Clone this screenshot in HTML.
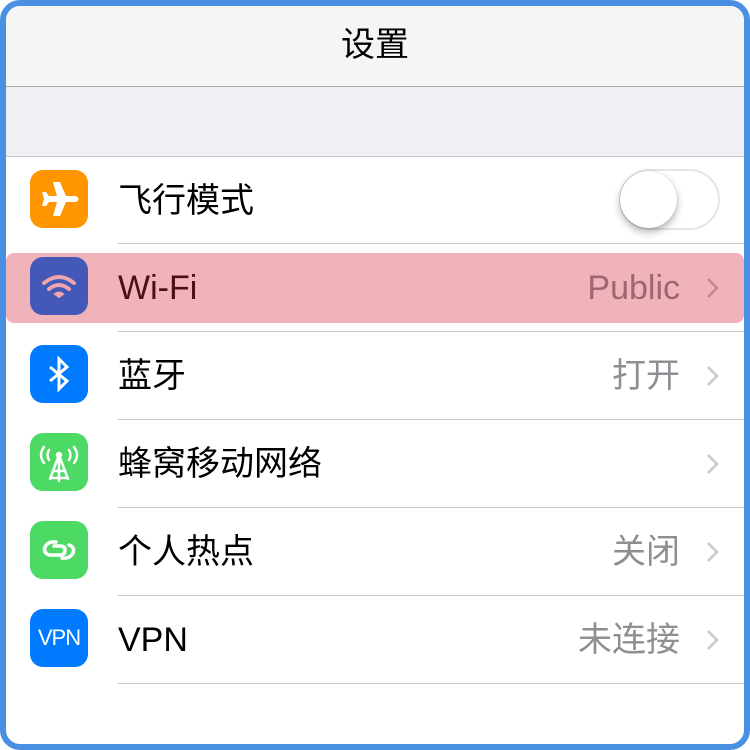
<!DOCTYPE html>
<html><head><meta charset="utf-8"><style>
*{margin:0;padding:0;box-sizing:border-box}
html,body{width:750px;height:750px;background:#fff;overflow:hidden}
body{font-family:"Liberation Sans","Noto Sans CJK SC",sans-serif}
.frame{position:absolute;left:0;top:0;width:750px;height:750px;border:6px solid #4a90e2;border-radius:20px;overflow:hidden;background:#fff}
.nav{position:absolute;left:0;top:0;width:738px;height:81px;background:#f5f5f5;border-bottom:1px solid #adadad;text-align:center;font-size:34px;line-height:78px;color:#000}
.band{position:absolute;left:0;top:81px;width:738px;height:70px;background:#efeff4;border-bottom:1px solid #c8c7cc}
.row{position:absolute;left:0;width:738px;height:88px}
.icon{position:absolute;left:24px;top:13px;width:58px;height:58px;border-radius:13px}
.label{position:absolute;left:112px;top:0;line-height:88px;font-size:34px;color:#000}
.val{position:absolute;right:64px;top:0;line-height:88px;font-size:34px;color:#8e8e93}
.chev{position:absolute;right:24px;top:33px}
.sep{position:absolute;left:112px;width:626px;height:1px;background:#c8c7cc}
.hl{position:absolute;left:0;top:247px;width:738px;height:70px;background:#f0b3ba;border-radius:8px}
</style></head><body><div class="frame">
<div class="nav">设置</div>
<div class="band"></div>

<div class="row" style="top:151px">
 <div class="icon" style="background:#ff9500"><svg width="58" height="58" viewBox="0 0 58 58"><path d="M23 12 L30 12 L36 26 L46 26 Q51 29 46 32 L36 32 L30 46 L23 46 L27 32 L19 32 L16 36 L12 36 L14 29 L12 22 L16 22 L19 26 L27 26 Z" fill="#fff"/></svg></div>
 <div class="label">飞行模式</div>
 <div style="position:absolute;left:613px;top:12px;width:101px;height:61px;border-radius:31px;border:2px solid #e5e5e5;background:#fff"></div>
 <div style="position:absolute;left:614px;top:14px;width:57px;height:57px;border-radius:50%;background:#fff;box-shadow:0 4px 8px rgba(0,0,0,.3),0 0 1px rgba(0,0,0,.3)"></div>
</div>
<div class="sep" style="top:237px"></div>

<div class="hl"></div>
<div class="row" style="top:238px">
 <div class="icon" style="background:#4458b8"><svg width="58" height="58" viewBox="0 0 58 58" fill="none" stroke="#eda4ad" stroke-width="4" stroke-linecap="round"><path d="M14 26 Q29 14 44 26"/><path d="M19 32 Q29 24 39 32"/><path d="M25 37 L29 40 L33 37 Q29 34 25 37Z" fill="#eda4ad" stroke-width="2"/></svg></div>
 <div class="label" style="color:#4a0f18">Wi-Fi</div>
 <div class="val" style="color:#9e6672">Public</div>
 <svg class="chev" width="14" height="22"><path d="M2 2 L11 11 L2 20" fill="none" stroke="#c48892" stroke-width="2.5"/></svg>
</div>
<div class="sep" style="top:325px"></div>

<div class="row" style="top:326px">
 <div class="icon" style="background:#007aff"><svg width="58" height="58" viewBox="0 0 58 58" fill="none" stroke="#fff" stroke-width="3"><path d="M20 22 L37 36 L29 44 L29 14 L37 22 L20 36"/></svg></div>
 <div class="label">蓝牙</div>
 <div class="val">打开</div>
 <svg class="chev" width="14" height="22"><path d="M2 2 L11 11 L2 20" fill="none" stroke="#c7c7cc" stroke-width="2.5"/></svg>
</div>
<div class="sep" style="top:413px"></div>

<div class="row" style="top:414px">
 <div class="icon" style="background:#4cd964"><svg width="58" height="58" viewBox="0 0 58 58" fill="none" stroke="#fff" stroke-width="2.5" stroke-linecap="round"><path d="M14 14 Q8 22 14 30"/><path d="M44 14 Q50 22 44 30"/><path d="M19 17 Q16 22 19 27"/><path d="M39 17 Q42 22 39 27"/><circle cx="29" cy="22" r="2" fill="#fff"/><path d="M29 22 L29 48 M29 22 L20 46 M29 22 L38 46 M23 38 L35 38 M21 45 L37 45"/></svg></div>
 <div class="label">蜂窝移动网络</div>
 <svg class="chev" width="14" height="22"><path d="M2 2 L11 11 L2 20" fill="none" stroke="#c7c7cc" stroke-width="2.5"/></svg>
</div>
<div class="sep" style="top:501px"></div>

<div class="row" style="top:502px">
 <div class="icon" style="background:#4cd964"><svg width="58" height="58" viewBox="0 0 58 58" fill="none" stroke="#fff" stroke-width="3.5" stroke-linecap="round"><path d="M26 21 Q18 20 15 26 Q13 32 19 34 L30 34 Q35 34 35 29 Q35 25 30 25 L24 25"/><path d="M32 37 Q40 38 43 32 Q45 26 39 24"/></svg></div>
 <div class="label">个人热点</div>
 <div class="val">关闭</div>
 <svg class="chev" width="14" height="22"><path d="M2 2 L11 11 L2 20" fill="none" stroke="#c7c7cc" stroke-width="2.5"/></svg>
</div>
<div class="sep" style="top:589px"></div>

<div class="row" style="top:590px">
 <div class="icon" style="background:#007aff;color:#fff;font-size:22px;text-align:center;line-height:58px;letter-spacing:-1px">VPN</div>
 <div class="label">VPN</div>
 <div class="val">未连接</div>
 <svg class="chev" width="14" height="22"><path d="M2 2 L11 11 L2 20" fill="none" stroke="#c7c7cc" stroke-width="2.5"/></svg>
</div>
<div class="sep" style="top:677px"></div>
</div></body></html>
